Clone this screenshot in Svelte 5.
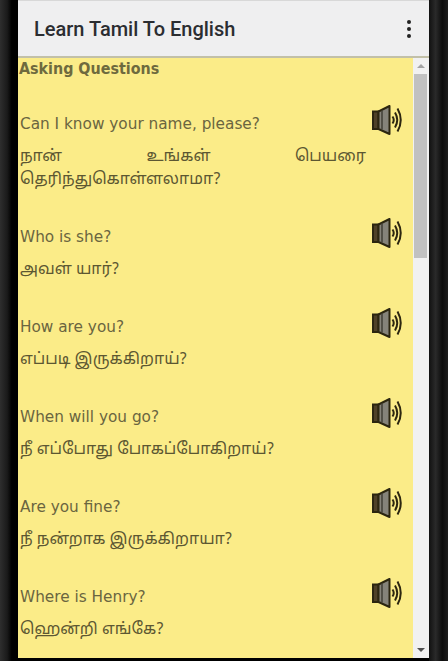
<script>
  const phrases = [
    { en: "Can I know your name, please?", ta: "நான் உங்கள் பெயரை தெரிந்துகொள்ளலாமா?" },
    { en: "Who is she?", ta: "அவள் யார்?" },
    { en: "How are you?", ta: "எப்படி இருக்கிறாய்?" },
    { en: "When will you go?", ta: "நீ எப்போது போகப்போகிறாய்?" },
    { en: "Are you fine?", ta: "நீ நன்றாக இருக்கிறாயா?" },
    { en: "Where is Henry?", ta: "ஹென்றி எங்கே?" }
  ]
</script>

<div class="device">
  <div class="edge left"></div>
  <div class="screen">
    <header>
      <h1>Learn Tamil To English</h1>
      <div class="menu"><i></i><i></i><i></i></div>
    </header>
    <div class="body">
      <main>
        <h2>Asking Questions</h2>
        {#each phrases as p}
          <section>
            <div class="question">
              <span>{p.en}</span>
              <svg width="30" height="30" viewBox="0 0 30 30" aria-hidden="true">
                <path d="M1 6.500h5.500v17.500H1z" fill="#4f4128" stroke="#2c2610" stroke-width="2" />
                <path d="M6.500 6.500L17.500 1v28L6.500 24z" fill="#85837a" stroke="#2c2610" stroke-width="2" stroke-linejoin="round" />
                <path d="M10 5.500v19" stroke="#45433a" stroke-width="1.600" />
                <path d="M20.500 11.500q2.500 3.500 0 7" fill="none" stroke="#2c2610" stroke-width="2" />
                <path d="M23 7.500q4.500 7.500 0 15" fill="none" stroke="#2c2610" stroke-width="2" />
                <path d="M25.500 3.500q6.500 11.500 0 23" fill="none" stroke="#2c2610" stroke-width="2" />
              </svg>
            </div>
            <p>{p.ta}</p>
          </section>
        {/each}
      </main>
      <div class="scrollbar">
        <div class="arrow up"></div>
        <div class="track"><div class="thumb"></div></div>
        <div class="arrow down"></div>
      </div>
    </div>
    <div class="bottom"></div>
  </div>
  <div class="edge right"></div>
</div>

<style>
  :global(body) {
    margin: 0;
    background: #000;
  }

  .device {
    display: flex;
    width: 448px;
    height: 661px;
    overflow: hidden;
  }

  .edge {
    flex: none;
  }

  .edge.left {
    width: 18px;
    background: linear-gradient(to right, #2e2e2e, #1a1a1a 40%, #000 65%);
  }

  .edge.right {
    width: 19px;
    background: linear-gradient(to right, #111, #2a2a2a 35%, #0c0c0c 70%, #1c1c1c);
  }

  .screen {
    flex: 1;
    min-width: 0;
    display: flex;
    flex-direction: column;
    background: #fff;
  }

  header {
    height: 58px;
    flex: none;
    box-sizing: border-box;
    display: flex;
    align-items: center;
    justify-content: space-between;
    padding: 0 18px 0 16px;
    background: #efeff0;
    border-top: 1px solid #d8d8d8;
    border-bottom: 2px solid #c2c0a8;
  }

  h1 {
    margin: 0;
    font: 500 20px Roboto, sans-serif;
    color: #2b2d31;
  }

  .menu {
    display: flex;
    flex-direction: column;
    gap: 3px;
  }

  .menu i {
    width: 4px;
    height: 4px;
    border-radius: 50%;
    background: #222;
  }

  .body {
    flex: 1;
    min-height: 0;
    display: flex;
  }

  main {
    flex: 1;
    min-width: 0;
    background: #fbec88;
    color: #6a6540;
    font-family: "DejaVu Sans", sans-serif;
    overflow: hidden;
  }

  h2 {
    margin: 0;
    padding: 1px 0 0 1px;
    height: 43px;
    font-family: "DejaVu Sans Condensed", "DejaVu Sans", sans-serif;
    font-size: 15.900px;
    line-height: 20px;
    font-weight: bold;
    color: #6e6a3e;
  }

  section {
    padding: 0 2px;
    margin-bottom: 23px;
  }

  .question {
    display: flex;
    justify-content: space-between;
    align-items: center;
    height: 44px;
    padding-right: 9px;
    font-size: 15.300px;
  }

  .question svg {
    flex: none;
    margin-top: -8px;
  }

  p {
    margin: 0;
    font: 16px/23px "Noto Sans Tamil", "Noto Sans", "DejaVu Sans", sans-serif;
    color: #5c5732;
    text-align: justify;
    padding-right: 45px;
  }

  .scrollbar {
    width: 16px;
    flex: none;
    display: flex;
    flex-direction: column;
    background: #f1f1f1;
  }

  .arrow {
    height: 16px;
    flex: none;
    display: flex;
    align-items: center;
    justify-content: center;
  }

  .arrow::before {
    content: "";
    border-left: 4px solid transparent;
    border-right: 4px solid transparent;
  }

  .arrow.up::before {
    border-bottom: 4px solid #a3a3a3;
  }

  .arrow.down::before {
    border-top: 4px solid #505050;
  }

  .track {
    flex: 1;
    padding-right: 2px;
    padding-left: 1px;
  }

  .thumb {
    height: 184px;
    background: #c1c1c1;
  }

  .bottom {
    height: 3px;
    flex: none;
    background: #000;
  }
</style>
